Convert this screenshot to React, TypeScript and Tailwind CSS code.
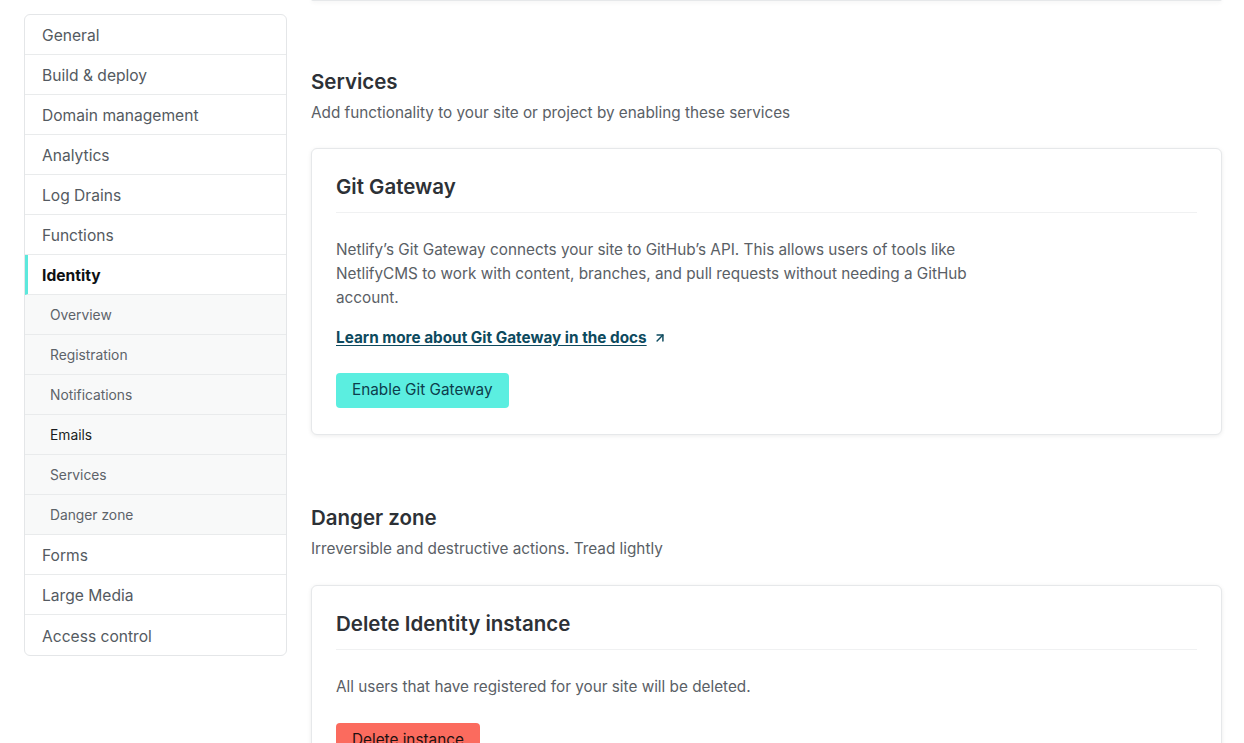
import { ArrowUpRight } from 'lucide-react';

const mainItems = ['General', 'Build & deploy', 'Domain management', 'Analytics', 'Log Drains', 'Functions'];
const subItems = ['Overview', 'Registration', 'Notifications', 'Emails', 'Services', 'Danger zone'];
const afterItems = ['Forms', 'Large Media', 'Access control'];

function Sidebar() {
  return (
    <nav className="w-[263px] shrink-0 mt-[14px] self-start rounded-md border border-[#e4e6e8] bg-white overflow-hidden">
      {mainItems.map((item) => (
        <div key={item} className="h-10 flex items-center pt-[3px] px-[17px] border-b border-[#e9ebec] text-[15.6px] text-[#545a61]">
          {item}
        </div>
      ))}
      <div className="h-10 flex items-center pt-[3px] pl-[14px] border-b border-[#e9ebec] border-l-[3px] border-l-[#5ce8dc] text-[15.6px] font-bold text-[#0e1114]">
        Identity
      </div>
      {subItems.map((item) => (
        <div
          key={item}
          className={`h-10 flex items-center pt-[2px] px-[25px] border-b border-[#e9ebec] bg-[#f8f9f9] text-[13.8px] ${
            item === 'Emails' ? 'text-[#1a1d21]' : 'text-[#5d6369]'
          }`}
        >
          {item}
        </div>
      ))}
      {afterItems.map((item, i) => (
        <div
          key={item}
          className={`h-10 flex items-center pt-[3px] px-[17px] text-[15.6px] text-[#545a61] ${
            i < afterItems.length - 1 ? 'border-b border-[#e9ebec]' : ''
          }`}
        >
          {item}
        </div>
      ))}
    </nav>
  );
}

function Card({ children }: { children: React.ReactNode }) {
  return (
    <div className="rounded-md border border-[#e6e8ea] bg-white px-6 pt-[26px] pb-[26px] shadow-[0_1px_4px_rgba(0,0,0,0.08)]">
      {children}
    </div>
  );
}

export default function App() {
  return (
    <div
      className="min-h-screen bg-white flex gap-6 pl-6 pr-[22px] overflow-hidden"
      style={{ fontFamily: 'Inter, "Noto Sans", sans-serif' }}
    >
      <Sidebar />
      <main className="flex-1 min-w-0">
        <div className="h-[1px] -mt-px rounded-b-md border border-[#e6e8ea] shadow-[0_1px_4px_rgba(0,0,0,0.08)]" />

        <section className="mt-[69px]">
          <h2 className="text-[20.5px] leading-6 font-semibold text-[#2d3136]">Services</h2>
          <p className="mt-[7px] text-[15.3px] leading-6 text-[#5a6066]">
            Add functionality to your site or project by enabling these services
          </p>
          <div className="mt-[23px]">
            <Card>
              <h3 className="text-[20.5px] leading-6 font-semibold text-[#2d3136] pb-[13px] border-b border-[#f0f1f2]">
                Git Gateway
              </h3>
              <p className="mt-[25px] max-w-[640px] text-[15.3px] leading-6 text-[#5a6066]">
                Netlify’s Git Gateway connects your site to GitHub’s API. This allows users of tools like NetlifyCMS to
                work with content, branches, and pull requests without needing a GitHub account.
              </p>
              <a className="mt-[17px] inline-flex items-center gap-1.5 text-[15.3px] font-bold text-[#0d4a5e]">
                <span className="underline underline-offset-2">Learn more about Git Gateway in the docs</span>
                <ArrowUpRight size={14} strokeWidth={2.5} />
              </a>
              <div className="mt-[23px]">
                <button className="h-[35px] px-4 rounded bg-[#5beee0] text-[15.3px] text-[#0d3d4c]">Enable Git Gateway</button>
              </div>
            </Card>
          </div>
        </section>

        <section className="mt-[71px]">
          <h2 className="text-[20.5px] leading-6 font-semibold text-[#2d3136]">Danger zone</h2>
          <p className="mt-[7px] text-[15.3px] leading-6 text-[#5a6066]">Irreversible and destructive actions. Tread lightly</p>
          <div className="mt-6">
            <Card>
              <h3 className="text-[20.5px] leading-6 font-semibold text-[#2d3136] pb-[13px] border-b border-[#f0f1f2]">
                Delete Identity instance
              </h3>
              <p className="mt-[25px] text-[15.3px] leading-6 text-[#5a6066]">
                All users that have registered for your site will be deleted.
              </p>
              <div className="mt-6">
                <button className="h-[35px] px-4 rounded bg-[#fb6b5e] text-[15.3px] text-[#1e1112]">Delete instance</button>
              </div>
            </Card>
          </div>
        </section>
      </main>
    </div>
  );
}
